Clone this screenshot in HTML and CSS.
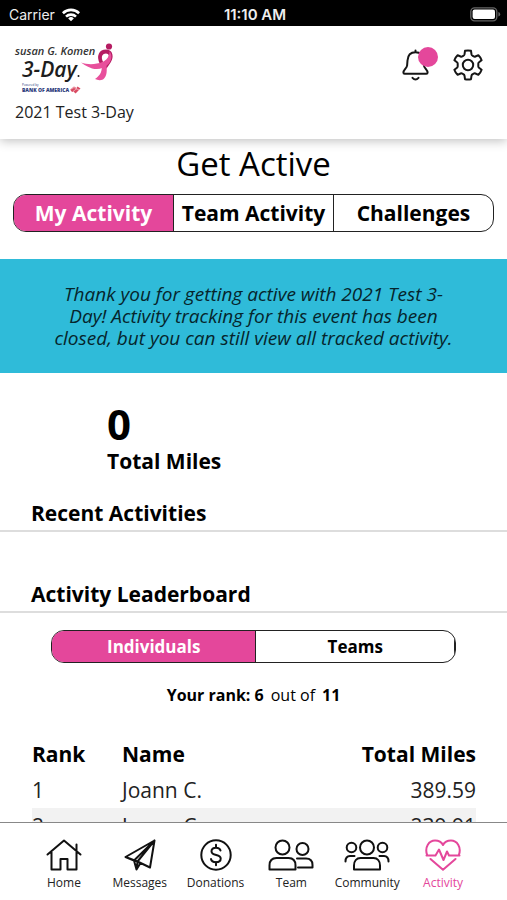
FILE: index.html
```html
<!DOCTYPE html>
<html lang="en">
<head>
<meta charset="utf-8">
<meta name="viewport" content="width=device-width, initial-scale=1">
<title>Get Active</title>
<link rel="stylesheet" href="styles.css">
</head>
<body>
<div class="status">
  <div class="status-left">
    <span>Carrier</span>
    <svg width="20" height="15" viewBox="0 0 20 15" fill="none" stroke="#fff" stroke-width="2.6"><path d="M1.900 6.200a11.600 11.600 0 0 1 16.200 0M5 9.600a7.200 7.200 0 0 1 10 0"/><path d="M10 14.200 7.200 11.400a4 4 0 0 1 5.600 0Z" fill="#fff" stroke="none"/></svg>
  </div>
  <span class="status-time">11:10 AM</span>
  <div class="status-right">
    <svg width="31" height="15" viewBox="0 0 31 15"><rect x=".8" y=".8" width="26" height="13" rx="3.8" fill="none" stroke="#666" stroke-width="1.3"/><rect x="2.6" y="2.5" width="22.4" height="9.6" rx="2" fill="#fff"/><path d="M28.4 5v4.6q1.8-.6 1.8-2.3T28.4 5Z" fill="#666"/></svg>
  </div>
</div>

<header class="header">
  <div class="brand">
    <svg class="logo" width="100" height="54" viewBox="0 0 100 54" role="img" aria-label="Susan G. Komen 3-Day">
      <g class="logo-text">
        <text x="0" y="14" font-size="11" font-weight="600" fill="#333">susan G. Komen</text>
        <text x="7" y="36" font-size="21" font-weight="600" fill="#1d1d1d">3-Day</text>
      </g>
      <circle cx="63.500" cy="35" r="1" fill="#1d1d1d"/>
      <g class="logo-small" fill="#2c3b7c">
        <text x="7" y="45" font-size="3">Powered by</text>
        <text x="7" y="51" font-size="5" font-weight="800">BANK OF AMERICA</text>
      </g>
      <circle cx="94" cy="5.500" r="3.100" fill="#b51c62"/>
      <path d="M86.500 22C83 15 86 10.500 91 10.500c5 0 6 5 3 10l-4 6" fill="none" stroke="#b51c62" stroke-width="3.800"/>
      <path d="M66 21.500c7 2.500 15 2 21.500-.5 4-2 7-5 7-10.500 3 3 2.500 8.500-1 12.500-6 6-14 6.500-21 2.500q-4-2-6.500-4Z" fill="#e8509c"/>
      <path d="M86.500 24c1 5-.5 10-6.500 14q4 2 8 .5c4-3 4.500-9 3-17Z" fill="#e8509c"/>
      <path d="M55 48.500l4-3 2.500 1.500L62.500 45.500l3 2-5 5-2-2-1.500.500Z" fill="#d94a62"/>
      <path d="M55 48.500l4-2 6 3M58 50.500l4-3" stroke="#fff" stroke-width=".5" fill="none"/>
    </svg>
    <span class="event">2021 Test 3-Day</span>
  </div>
  <div class="actions">
    <button class="icon-btn" aria-label="Notifications">
      <svg width="28" height="32" viewBox="0 0 28 32" fill="none" stroke="#161616" stroke-width="2" stroke-linejoin="round" stroke-linecap="round"><path d="M13.500 1.500v1.500M13.500 3.200C8.500 3.200 5.800 6.500 5.500 11.500l-.4 5c-.2 2.500-3.700 4.500-3.700 7 0 .8.500 1.200 1.200 1.200h21.800c.7 0 1.200-.4 1.200-1.200 0-2.500-3.500-4.500-3.700-7l-.4-5c-.3-5-3-8.300-8-8.300ZM10.500 28.800q3 3.400 6 0"/></svg>
      <span class="badge"></span>
    </button>
    <button class="icon-btn" aria-label="Settings">
      <svg width="32" height="32" viewBox="0 0 32 32" fill="none" stroke="#161616" stroke-width="2" stroke-linejoin="round"><circle cx="16" cy="16" r="5.200"/><path d="M13 1.800q3-.8 6 0l.5 3.600q.2 1 1.200 1.400l1 .6q.8.500 1.700.1l3-1.300q2.300 2.100 3.200 5l-2.600 2.100q-.8.600-.7 1.700v2q-.1 1.100.7 1.700l2.600 2.100q-.9 2.900-3.200 5l-3-1.300q-.9-.4-1.700.1l-1 .6q-1 .4-1.200 1.400l-.5 3.600q-3 .8-6 0l-.5-3.600q-.2-1-1.200-1.400l-1-.6q-.8-.5-1.700-.1l-3 1.300q-2.300-2.100-3.200-5L5 18.700q.8-.6.700-1.700v-2q.1-1.100-.7-1.700l-2.600-2.100q.9-2.900 3.200-5l3 1.300q.9.400 1.700-.1l1-.6q1-.4 1.200-1.400Z"/></svg>
    </button>
  </div>
</header>

<main class="main">
  <h1>Get Active</h1>
  <div class="tabs">
    <button class="on">My Activity</button>
    <button>Team Activity</button>
    <button>Challenges</button>
  </div>
  <p class="banner">Thank you for getting active with 2021 Test 3-<wbr>Day! Activity tracking for this event has been closed, but you can still view all tracked activity.</p>
  <div class="total">
    <span class="total-num">0</span>
    <span class="total-label">Total Miles</span>
  </div>
  <h2>Recent Activities</h2>
  <h2 class="leader">Activity Leaderboard</h2>
  <div class="tabs toggle">
    <button class="on">Individuals</button>
    <button>Teams</button>
  </div>
  <p class="rank"><b>Your rank: 6</b><span>out of</span><b>11</b></p>
  <table>
    <thead><tr><th class="c-rank">Rank</th><th>Name</th><th class="num">Total Miles</th></tr></thead>
    <tbody>
      <tr><td>1</td><td>Joann C.</td><td class="num">389.59</td></tr>
      <tr><td>2</td><td>Joann C.</td><td class="num">239.91</td></tr>
    </tbody>
  </table>
</main>

<nav class="nav">
  <a href="#home"><svg width="36" height="32" viewBox="0 0 36 32"><path d="M1.500 15.500 18 1.500l16.500 14M5.500 13v17.500h9V20h7v10.500h9V13M30.500 11.500V5.500"/></svg>Home</a>
  <a href="#messages"><svg width="32" height="32" viewBox="0 0 32 32"><path d="M1.500 18 30.500 1.500 26 28.500 13.500 22.500ZM1.500 18l8.500 3.500L30.500 1.500 13.500 22.500 12.500 30.500 10 21.500M12.500 30.500l4-6.500"/></svg>Messages</a>
  <a href="#donations"><svg width="32" height="32" viewBox="0 0 32 32"><circle cx="16" cy="16" r="14.700"/><path d="M20.500 11.500c-.5-2-2.200-2.800-4.500-2.800-2.700 0-4.500 1.300-4.500 3.500 0 5.300 9.200 2.300 9.200 7.300 0 2.300-2 3.700-4.700 3.700-2.600 0-4.600-1-5-3.200M16 5.800v3M16 23v3.300"/></svg>Donations</a>
  <a href="#team"><svg width="46" height="32" viewBox="0 0 46 32"><circle cx="14.500" cy="8.500" r="7"/><path d="M1.500 30.500v-4c0-5 3-7.500 7-7.500h12c4 0 7 2.500 7 7.500v4Z"/><circle cx="34.500" cy="10" r="6"/><path d="M29 19.500h9c4 0 6.500 2.500 6.500 6.500v2.500H30"/></svg>Team</a>
  <a href="#community"><svg width="46" height="32" viewBox="0 0 46 32"><circle cx="23" cy="8.500" r="7"/><path d="M10 30.500v-4c0-4.500 2.500-7.500 6.500-7.500h13c4 0 6.500 3 6.500 7.500v4Z"/><circle cx="7.500" cy="8.500" r="4.800"/><circle cx="38.500" cy="8.500" r="4.800"/><path d="M1.500 22.500c0-3.500 1.500-5.500 4.500-5.500h4.500M44.500 22.500c0-3.500-1.500-5.500-4.500-5.500h-4.500"/></svg>Community</a>
  <a href="#activity" class="active"><svg width="36" height="32" viewBox="0 0 36 32"><path d="M2 15.500C-.5 8 4 1.500 10 1.500c3.500 0 6.500 1.500 8 4.500 1.500-3 4.500-4.500 8-4.500 6 0 10.500 6.500 8 14M1.500 16.500h9l3.500-6 4.500 10.500 3.500-8.500 2 4h10.500M5.500 20 18 30.800 30.500 20"/></svg>Activity</a>
</nav>
</body>
</html>
```
FILE: styles.css
```css
* { box-sizing: border-box; }
body {
  margin: 0;
  height: 100vh;
  display: flex;
  flex-direction: column;
  overflow: hidden;
  background: #fff;
  color: #000;
  font-family: "Open Sans", sans-serif;
  font-size: 21px;
}
button { font: inherit; color: inherit; background: none; border: 0; padding: 0; }
h1, h2, p { margin: 0; }
b, th { font-weight: 700; }

.status {
  flex: none;
  display: grid;
  grid-template-columns: 1fr auto 1fr;
  align-items: center;
  height: 26px;
  padding: 2px 6px 0 9px;
  background: #000;
  color: #eee;
  font-family: Inter, sans-serif;
  font-size: 14px;
}
.status-left { display: flex; align-items: center; gap: 6px; }
.status-time { font-size: 15px; font-weight: 600; }
.status-right { display: flex; justify-content: flex-end; }

.header {
  flex: none;
  position: relative;
  z-index: 1;
  display: flex;
  justify-content: space-between;
  height: 113px;
  padding: 15px 23px 0 15px;
  background: #fff;
  box-shadow: 0 2px 10px rgba(0, 0, 0, .25);
}
.brand { display: flex; flex-direction: column; }
.logo { overflow: visible; }
.logo-text { font-family: "Open Sans", sans-serif; font-style: italic; }
.logo-small { font-family: "Open Sans", sans-serif; }
.event { font-size: 16px; line-height: 24px; margin-top: 5px; color: #222; }
.actions { display: flex; align-items: flex-start; gap: 22px; padding-top: 8px; }
.icon-btn { position: relative; display: flex; }
.badge {
  position: absolute;
  top: -2px;
  right: -8px;
  width: 20px;
  height: 20px;
  border-radius: 50%;
  background: #e4479b;
}

.main { flex: 1; min-height: 0; overflow: hidden; }
h1 { text-align: center; font-size: 33px; font-weight: 500; line-height: 50px; }
.tabs {
  display: flex;
  height: 38px;
  margin: 5px 13px 0;
  border: 1px solid #222;
  border-radius: 13px;
  overflow: hidden;
  font-weight: 700;
}
.tabs button { flex: 1 1 0; white-space: nowrap; }
.tabs button + button { border-left: 1px solid #222; }
.tabs .on { background: #e4479b; color: #fff; }
.banner {
  margin-top: 27px;
  padding: 24px 48px;
  background: #2fbbd9;
  color: #06252c;
  text-align: center;
  font-size: 19px;
  font-style: italic;
  line-height: 22px;
}
.total { display: flex; flex-direction: column; padding: 28px 107px 0; font-weight: 700; }
.total-num { font-size: 42px; line-height: 46px; }
.total-label { line-height: 28px; }
h2 {
  margin-top: 21px;
  padding: 0 31px;
  font-size: 21px;
  font-weight: 700;
  line-height: 34px;
  border-bottom: 2px solid #ddd;
}
.leader { margin-top: 45px; }
.toggle { height: 33px; margin: 17px 51px 0; font-size: 17px; }
.toggle .on { flex-grow: 1.03; }
.toggle button:last-child { border-right: 1px solid #222; }
.rank { display: flex; justify-content: center; gap: 7px; margin-top: 20px; font-size: 16px; line-height: 24px; }
table { width: calc(100% - 63px); margin: 29px 31px 0 32px; border-collapse: collapse; line-height: 36px; }
th, td { padding: 0; text-align: left; }
td { color: #222; }
.c-rank { width: 90px; }
.num { text-align: right; }
tbody tr:nth-child(even) { background: #f2f2f2; }

.nav {
  flex: none;
  position: relative;
  display: flex;
  height: 78px;
  padding: 16px 26px 0;
  background: #fff;
  border-top: 1px solid #888;
}
.nav a {
  flex: 1 1 0;
  min-width: 0;
  display: flex;
  flex-direction: column;
  align-items: center;
  color: #222;
  text-decoration: none;
  font-size: 12px;
  line-height: 24px;
}
.nav svg { fill: none; stroke: #111; stroke-width: 2; stroke-linejoin: round; stroke-linecap: round; }
.nav .active { color: #e4479b; }
.nav .active svg { stroke: #e4479b; }
```
